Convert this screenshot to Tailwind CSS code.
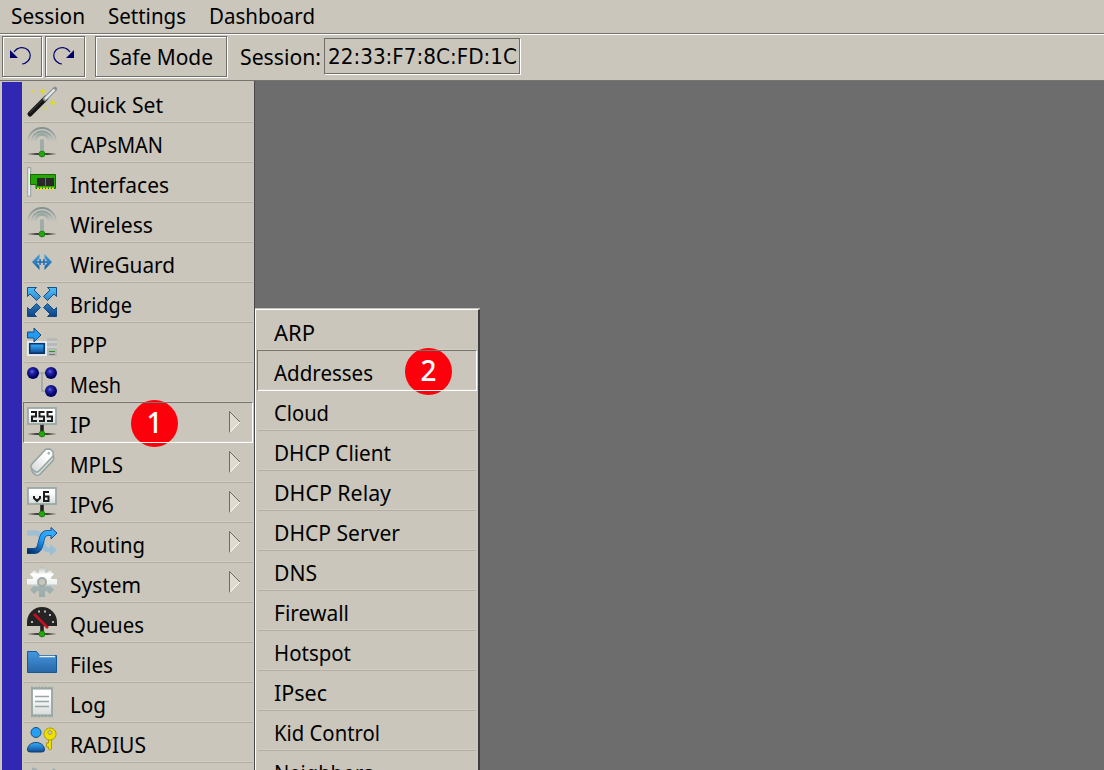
<!DOCTYPE html>
<html lang="en">
<head>
<meta charset="utf-8">
<title>Router administration</title>
<script src="https://cdn.jsdelivr.net/npm/@tailwindcss/browser@4"></script>
</head>
<body class="w-[1104px] h-[770px] overflow-hidden bg-[#cac6bb] text-black font-['Noto_Sans',sans-serif] text-[22px] leading-[40px] whitespace-nowrap flex flex-col">
<svg class="absolute" width="0" height="0">
<defs>
<linearGradient id="paper" x2="0" y2="1"><stop offset=".3" stop-color="#fff"/><stop offset="1" stop-color="#d5dad8"/></linearGradient>
<linearGradient id="blue" x2="0" y2="1"><stop stop-color="#35b0ff"/><stop offset="1" stop-color="#124b92"/></linearGradient>
<linearGradient id="sky" gradientUnits="userSpaceOnUse" x1="0" y1="0" x2="0" y2="30"><stop stop-color="#4fc0ff"/><stop offset="1" stop-color="#0d4082"/></linearGradient>
<linearGradient id="folder" x2="0" y2="1"><stop stop-color="#4698e0"/><stop offset="1" stop-color="#2667a6"/></linearGradient>
<linearGradient id="route" x1="0" y1="1" x2="1" y2="0"><stop stop-color="#062c68"/><stop offset=".6" stop-color="#1f9dfa"/><stop offset="1" stop-color="#36aeff"/></linearGradient>
<linearGradient id="gear" gradientUnits="userSpaceOnUse" x1="0" y1="0" x2="0" y2="30"><stop stop-color="#b4c0be"/><stop offset=".25" stop-color="#fff"/><stop offset=".55" stop-color="#eef2f1"/><stop offset=".66" stop-color="#a2b2b0"/><stop offset="1" stop-color="#9aacaa"/></linearGradient>
<linearGradient id="fade" gradientUnits="userSpaceOnUse" x1="0" y1="0" x2="30" y2="0"><stop stop-color="#333" stop-opacity="0"/><stop offset=".3" stop-color="#222"/><stop offset=".7" stop-color="#222"/><stop offset="1" stop-color="#333" stop-opacity="0"/></linearGradient>
<linearGradient id="arc" gradientUnits="userSpaceOnUse" x1="0" y1="0" x2="0" y2="15"><stop stop-color="#7f918f"/><stop offset=".5" stop-color="#97a6a3"/><stop offset="1" stop-color="#a7b2af" stop-opacity="0"/></linearGradient>
<radialGradient id="ball" cx=".42" cy=".38"><stop stop-color="#6b6ae8"/><stop offset=".35" stop-color="#2726ad"/><stop offset="1" stop-color="#020260"/></radialGradient>
<g id="node"><path d="M1 26.2h28v1.600H1z" fill="url(#fade)"/><circle cx="15" cy="27" r="3" fill="#25a50d" stroke="#15780a" stroke-width=".7"/></g>
<g id="antenna"><g fill="none" stroke="url(#arc)"><path d="M1 15a14 14 0 0 1 28 0" stroke-width="1.800"/><path d="M4.500 15a10.500 10.500 0 0 1 21 0" stroke-width="2"/><path d="M8.500 14a6.500 6.500 0 0 1 13 0" stroke-width="3"/></g><rect x="13" y="12" width="4" height="14" rx="1.500" fill="#9fadaa"/><use href="#node"/></g>
<g id="board"><path d="M13.200 17h3.600v8h-3.600z" fill="#222"/><rect x="1" y="1" width="28" height="16" fill="url(#paper)" stroke="#95a6a4" stroke-width="1.700"/><use href="#node"/></g>
<g id="cog"><path d="M12 0h6l-.8 7h-4.400zM12 30h6l-.8-7h-4.400z"/></g>
</defs>
</svg>

<nav class="h-[34px] shrink-0 border-b border-[#77736f] flex items-start leading-[30px] pl-[11px]">
  <a class="w-[97px]"><span class="inline-block origin-left" data-w="73">Session</span></a>
  <a class="w-[101px]"><span class="inline-block origin-left" data-w="77">Settings</span></a>
  <a><span class="inline-block origin-left" data-w="105">Dashboard</span></a>
</nav>
<div class="h-[47px] shrink-0 border-t border-t-white border-b border-b-[#77736f] flex items-start pt-px pl-[2px]">
  <button class="w-[40px] h-[41px] mr-[3px] border border-[#706e6b] shadow-[1px_1px_0_#fff,inset_1px_1px_0_#fff] flex items-center justify-center">
    <svg width="38" height="39" viewBox="0 0 38 39"><path d="M11 15c4-6 11-5 14-2s3 8 0 11q-3 3-6 3" fill="none" stroke="#00006f" stroke-width="1.200"/><path d="M7 13v8h8z" fill="#00006f"/></svg>
  </button>
  <button class="w-[40px] h-[41px] mr-[10px] border border-[#706e6b] shadow-[1px_1px_0_#fff,inset_1px_1px_0_#fff] flex items-center justify-center">
    <svg width="38" height="39" viewBox="0 0 38 39"><path d="M24 15c-4-6-11-5-14-2s-3 8 0 11q3 3 6 3" fill="none" stroke="#00006f" stroke-width="1.200"/><path d="M28 13v8h-8z" fill="#00006f"/></svg>
  </button>
  <button class="w-[132px] h-[41px] border border-[#706e6b] shadow-[1px_1px_0_#fff,inset_1px_1px_0_#fff] text-left pl-[13px] leading-[38px] flex items-start"><span class="inline-block origin-left" data-w="103">Safe Mode</span></button>
  <label class="w-[97px] pl-[13px] leading-[40px]"><span class="inline-block origin-left" data-w="80">Session:</span></label>
  <output class="w-[196px] h-[36px] mt-[2px] border border-[#706e6b] shadow-[1px_1px_0_#fff] pl-[3px] leading-[36px] font-['DejaVu_Sans_Condensed','DejaVu_Sans',sans-serif] text-[21px]"><span class="inline-block origin-left" data-w="188" data-font="21px 'DejaVu Sans Condensed', 'DejaVu Sans', sans-serif">22:33:F7:8C:FD:1C</span></output>
</div>

<div class="relative flex flex-1 min-h-0 overflow-hidden">
  <aside class="w-[254px] shrink-0 flex pl-[2px] pt-px">
    <div class="w-5 bg-[#3028b2]"></div>
    <ul id="menu" class="w-[230px] ml-px"></ul>
  </aside>
  <main class="flex-1 bg-[#6d6d6d] border-l border-[#484848]"></main>
  <ul id="submenu" class="absolute left-[255px] top-[228px] w-[225px] bottom-0 border-l border-t border-white border-r-2 border-r-[#3b3d3e] bg-[#cac6bb] pl-px pr-px shadow-[0_-1px_0_#c6c2b8]"></ul>
  <div class="absolute left-[131px] top-[319px] size-[47px] rounded-full bg-[#fc000b] text-white text-center text-[28px] leading-[45px] font-medium font-['Noto_Sans',sans-serif]">1</div>
  <div class="absolute left-[405px] top-[267px] size-[47px] rounded-full bg-[#fc000b] text-white text-center text-[28px] leading-[44px] font-medium font-['Noto_Sans',sans-serif]">2</div>
</div>

<script>
const antenna = '<use href="#antenna"/>';
const entries = [
 ['Quick Set',92,'<path d="M3 27 19 11" stroke="#151515" stroke-width="5" stroke-linecap="round"/><path d="M2.500 26 17 11.500" stroke="#494949"/><path d="M18 12 28 2" stroke="#888f90" stroke-width="4.500" stroke-linecap="round"/><path d="M18 12 27.500 2.500" stroke="#e4e8e8" stroke-width="2.400"/><path d="M16 1l1 2.500 3 1-3 1-1 3-1-3-3-1 3-1zM26 12l1 2.500 3 1-3 1-1 3-1-3-3-1 3-1zM5 3l2 1-2 2-1-2zM18 20l2 1-2 2-1-2z" fill="#dcdd19"/>'],
 ['CAPsMAN',92,antenna],
 ['Interfaces',98,'<rect x=".7" y=".7" width="3" height="28.500" fill="#edf1ef" stroke="#91a09e"/><path d="M3.500 7.500h25v14H9v-4H3.500z" fill="#25a600" stroke="#176800"/><path d="M10 11h8v8h-8zM19 11h8v8h-8z" fill="#292929"/><path d="M10 21.500h17" stroke="#eee21d" stroke-width="2" stroke-dasharray="2 1"/>'],
 ['Wireless',82,antenna],
 ['WireGuard',104,'<path d="M12.500 7 5 15l7.500 8v-4L9 15l3.500-4zM17.500 7l7.500 8-7.500 8v-4l3.500-4-3.500-4z" fill="url(#sky)"/><path d="M9 14.200h12v1.600H9zM12.300 12h1.500v6h-1.500zM16.200 12h1.500v6h-1.500z" fill="#1b69b9"/>'],
 ['Bridge',61,'<g fill="url(#sky)" stroke="#0b4279" stroke-width=".9"><path d="M.5.5h9L7 3l6.500 6.500-4 4L3 7 .5 9.500z"/><path d="M29.500.5h-9L23 3l-6.500 6.500 4 4L27 7l2.500 2.500zM.5 29.500h9L7 27l6.500-6.500-4-4L3 23 .5 20.500zM29.500 29.500h-9L23 27l-6.500-6.500 4-4L27 23l2.500-2.500z"/></g>'],
 ['PPP',36,'<path d="M20 11h10v18H20z" fill="#b7b9b7"/><path d="M20 15h10M20 20h10" stroke="#e1e2df"/><path d="M22 24.500h6" stroke="#269720"/><path d="M22 27.500h6" stroke="#777"/><rect x="1" y="15" width="18" height="13" fill="#123f74" stroke="#edf1f4" stroke-width="1.800"/><rect x="3" y="17" width="14" height="9" fill="url(#blue)" stroke="#082f63"/><path d="M.5 5H7V1l7 7-7 7v-4H.5z" fill="#239bf2" stroke="#194b7c"/>'],
 ['Mesh',50,'<path d="M6 6h18M15 6v18h9" fill="none" stroke="#98a6a3" stroke-width="1.500"/><circle cx="6" cy="6" r="6" fill="url(#ball)"/><circle cx="24" cy="6" r="6" fill="url(#ball)"/><circle cx="24" cy="24" r="6" fill="url(#ball)"/>'],
 ['IP',20,'<use href="#board"/><path d="M4 5h5v4.500H5V14h5M17.500 5h-5v4.500h4.500V14h-5M25.500 5h-5v4.500H25V14h-5" fill="none" stroke="#1c1c1c" stroke-width="2"/>',1,1],
 ['MPLS',52,'<g transform="rotate(43 15 15)" stroke="#91a29f" stroke-width="1.500"><rect x="12" y="3" width="10" height="26" rx="4" fill="#d5dbd9"/><path d="M9 3l3-3h4l3 3v20q0 4-4 4h-2q-4 0-4-4z" fill="url(#paper)"/><circle cx="14" cy="4" r="1" fill="#b9c1bf" stroke-width=".7"/></g>',1],
 ['IPv6',43,'<use href="#board"/><path d="M7 9v2l3 3 3-3V9M22 5h-5v9h4.500v-4.500H17" fill="none" stroke="#1c1c1c" stroke-width="2"/>',1],
 ['Routing',74,'<path d="M0 6h9c9 0 3 17 13 17h3" fill="none" stroke="#9dbed5" stroke-width="5"/><path d="M23 17l7 6-7 6z" fill="#9dbed5"/><path d="M0 24h7c10 0 4-18 14-18h4" fill="none" stroke="#134d83" stroke-width="6"/><path d="M24 .5 30 6l-6 6z" fill="#36aaff" stroke="#134d83"/><path d="M0 24h7c10 0 4-18 14-18h5" fill="none" stroke="url(#route)" stroke-width="4.500"/>',1],
 ['System',70,'<g fill="url(#gear)"><path d="M12 0h6v30h-6z"/><path d="M0 12h30v6H0z"/><path d="M3 7.200 7.200 3 27 22.800 22.800 27z"/><path d="M27 7.200 22.800 3 3 22.800 7.200 27z"/></g><circle cx="15" cy="15" r="10" fill="url(#gear)"/><circle cx="15" cy="15" r="4" fill="#cac6bb" stroke="#9fa9a6" stroke-width="2"/>',1],
 ['Queues',73,'<path d="M13.200 17h3.600v8h-3.600z" fill="#222"/><path d="M0 19v-4a15 15 0 0 1 30 0v4z" fill="#242424"/><path d="M4 14h2v2H4zM11 3.500h2v2h-2zM17 3.500h2v2h-2zM22 7h2v2h-2zM25 14h2v2h-2z" fill="#b9b9b9"/><path d="M7 7 21 21" stroke="#c50f22" stroke-width="2.700"/><use href="#node"/>'],
 ['Files',42,'<path d="M.5 25.500V4.500h9l3 4h17v17z" fill="url(#folder)" stroke="#195793"/><path d="M12.500 9.500H28" stroke="#e2f0fa" stroke-width="1.500"/>'],
 ['Log',35,'<path d="M5 1.500h20v27H5z" fill="url(#paper)" stroke="#95a6a4" stroke-width="1.800"/><path d="M4 1h22M4 29h22" stroke="#95a6a4" stroke-width="2.500" stroke-dasharray="2 1.500"/><path d="M8 9.500h14M8 14.500h14M8 19.500h14" stroke="#95a6a4" stroke-width="1.700"/>'],
 ['RADIUS',75,'<path d="M.5 23c0-10 17-10 17 0q0 2-3 2h-11q-3 0-3-2z" fill="url(#blue)" stroke="#123c72"/><circle cx="9" cy="5.500" r="5" fill="#269ef2" stroke="#174d82"/><g fill="#efe000" stroke="#9b9100" stroke-width=".8"><path d="M21.500 10h3v12l-1.500 1-1.500-1v-2h-2v-4h2z"/><path fill-rule="evenodd" d="M23 1a6 6 0 1 0 .1 0zm0 2.500a2 2 0 1 1-.1 0z"/></g>'],
 ['',0,'<path d="M5 2q6 0 6 7l7 8M28 2l-9 9" fill="none" stroke="#a1afad" stroke-width="3"/>']
];
document.getElementById('menu').innerHTML = entries.map(([name,w,art,more,on]) =>
 `<li class="relative h-10 flex items-start">
   <div class="absolute left-px right-0 bottom-[-1px] h-[2px] border-b border-b-[#b2aea4] bg-[#d2cec4]"></div>
   ${on ? '<div class="absolute left-0 right-0 top-0 h-[41px] z-10 border border-l-[#77736f] border-t-[#77736f] border-r-white border-b-white"></div>' : ''}
   <svg class="ml-1 mt-[5px] shrink-0 overflow-visible" width="30" height="30" viewBox="0 0 30 30">${art}</svg>
   <span class="ml-[13px] mt-[2px] inline-block origin-left" data-w="${w}">${name}</span>
   ${more ? '<svg class="absolute left-[206px] top-[9px]" width="12" height="22" viewBox="0 0 12 22"><path d="M.5.5 11 11 .5 21.500z" fill="#dfdbd0"/><path d="M.5 21.500 11 11" stroke="#fff"/><path d="M.5 21.500V.5L11 11" fill="none" stroke="#6f6c62"/></svg>' : ''}
 </li>`).join('');
const links = [['ARP',40],['Addresses',98,1],['Cloud',54],['DHCP Client',116],['DHCP Relay',116],['DHCP Server',125],['DNS',42],['Firewall',74],['Hotspot',76],['IPsec',52],['Kid Control',105],['Neighbors',98]];
document.getElementById('submenu').innerHTML = links.map(([name,w,on],i) =>
 `<li class="relative h-10 pl-[17px]">
   ${i ? '<div class="absolute left-px right-px top-[-1px] h-[2px] border-b border-b-[#b2aea4] bg-[#d2cec4]"></div>' : ''}
   ${on ? '<div class="absolute left-0 right-0 top-0 h-[41px] z-10 border border-l-[#77736f] border-t-[#77736f] border-r-white border-b-white"></div>' : ''}
   <span class="mt-[2px] inline-block origin-left" data-w="${w}">${name}</span>
 </li>`).join('');

const pen = document.createElement('canvas').getContext('2d');
for (const label of document.querySelectorAll('[data-w]')) {
  if (!label.textContent) continue;
  pen.font = label.dataset.font || '22px "Noto Sans"';
  label.style.transform = `scaleX(${(Number(label.dataset.w) + 1) / pen.measureText(label.textContent).width})`;
}
</script>
</body>
</html>
